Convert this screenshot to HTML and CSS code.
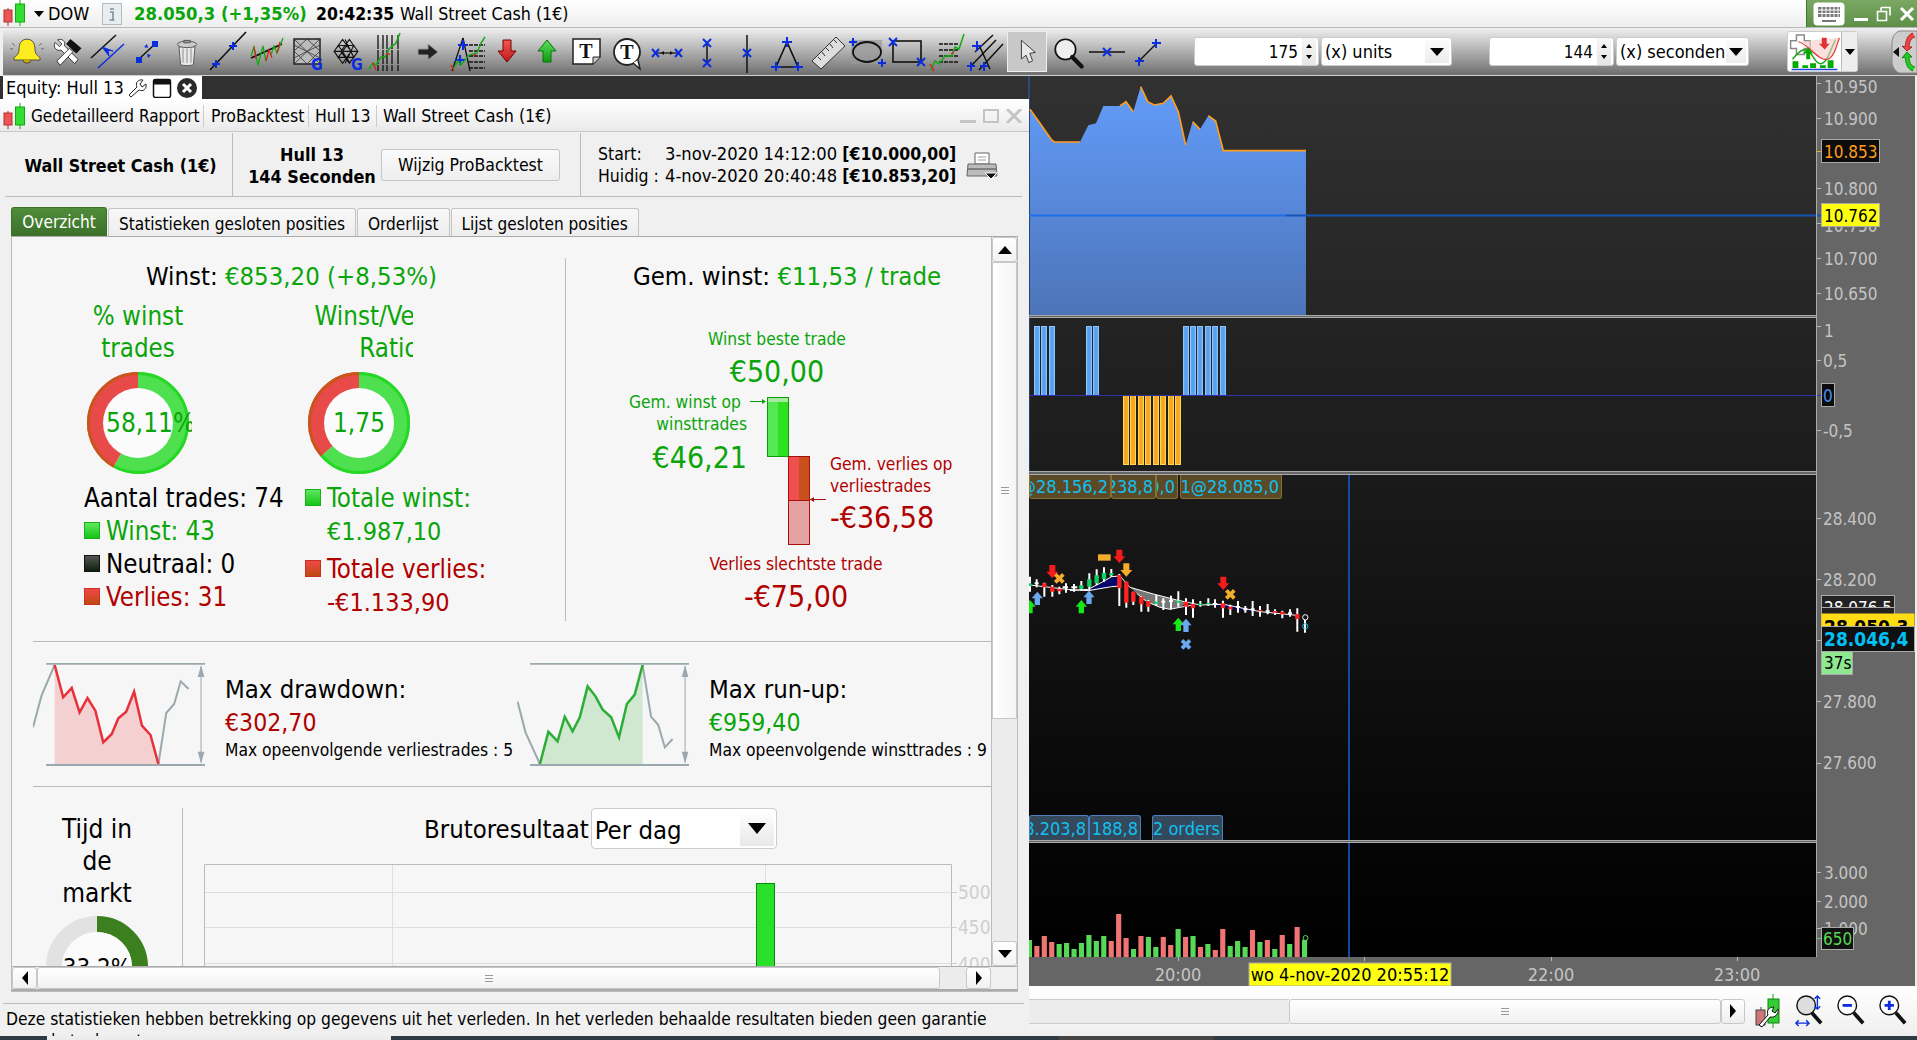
FILE: index.html
```html
<!DOCTYPE html>
<html lang="nl">
<head>
<meta charset="utf-8">
<title>Gedetailleerd Rapport</title>
<link rel="stylesheet" href="styles.css">
</head>
<body>
<svg class="defs" width="0" height="0">
  <defs>
    <linearGradient id="gArea" x1="0" y1="0" x2="0" y2="1"><stop offset="0" stop-color="#629cfa"/><stop offset="1" stop-color="#4d74b8"/></linearGradient>
    <linearGradient id="gRed" x1="0" y1="0" x2="0" y2="1"><stop offset="0" stop-color="#f05a50"/><stop offset="1" stop-color="#c01818"/></linearGradient>
    <linearGradient id="gGreen" x1="0" y1="0" x2="0" y2="1"><stop offset="0" stop-color="#5fe05f"/><stop offset="1" stop-color="#0f9a0f"/></linearGradient>
    <symbol id="candles" viewBox="0 0 25 27">
      <path d="M5 8v18" stroke="#a33" fill="none"/><rect x="1" y="10" width="8" height="12" fill="#e55" stroke="#a33"/>
      <path d="M17 0v26" stroke="#1a1" fill="none"/><rect x="12.500" y="4" width="9" height="18" fill="#3d3" stroke="#1a1"/>
    </symbol>
    <g id="up"><path d="M0-20L17 0H8V20H-8V0H-17z"/></g>
    <g id="down"><path d="M-9-20H9V0H18L0 20-18 0H-9z"/></g>
    <g id="cross"><path d="M-16-8L-8-16 0-8 8-16 16-8 8 0 16 8 8 16 0 8-8 16-16 8-8 0z"/></g>
  </defs>
</svg>
<div class="app">
  <header class="titlebar">
    <svg class="tb-candle"><use href="#candles"/></svg>
    <i class="tri-down tb-tri"></i>
    <span class="tb-dow">DOW</span>
    <svg class="tb-info" viewBox="0 0 20 24"><rect x=".5" y="1.500" width="19" height="21" fill="#e8eef0" stroke="#b4bcc0"/><path d="M8 7h4M8 10h3v8h1.500M7.500 18h5" fill="none" stroke="#7d9096" stroke-width="1.600"/></svg>
    <b class="tb-quote">28.050,3 (+1,35%)</b>
    <b class="tb-time">20:42:35</b>
    <span class="tb-name">Wall Street Cash (1€)</span>
    <div class="winctl">
      <svg class="wc-kbd" viewBox="0 0 32 24"><rect x=".5" y=".5" width="31" height="23" rx="4" fill="#fff"/><path d="M5 5h22v10H5z" fill="#777"/><path d="M5 8h22M5 11.500h22M9 5v10M13 5v10M17 5v10M21 5v10M25 5v10" stroke="#fff"/><rect x="9" y="18" width="14" height="2" fill="#777"/></svg>
      <svg class="wc-btn" viewBox="0 0 16 16"><rect x="1" y="12" width="14" height="3" fill="#fff"/></svg>
      <svg class="wc-btn" viewBox="0 0 16 16"><path d="M5 1.500h9v8M5 1.500v3M1.500 5.500h9v9h-9z" fill="none" stroke="#fff" stroke-width="1.600"/></svg>
      <svg class="wc-btn" viewBox="0 0 16 16"><path d="M2 2l12 12M14 2L2 14" stroke="#fff" stroke-width="3"/></svg>
    </div>
  </header>

  <nav class="toolbar">
    <svg class="ic" viewBox="0 0 40 44"><g transform="translate(0 2) scale(1 .8)"><path d="M20 9c-6 0-8 6-8 13 0 6-3 8-5 10v3h26v-3c-2-2-5-4-5-10 0-7-2-13-8-13z" fill="#ffec1e" stroke="#444"/><path d="M16 35a4 4 0 008 0" fill="#c9a800" stroke="#444"/><path d="M5 14l3 3M3 21h3M35 14l-3 3M37 21h-3" stroke="#666" fill="none"/></g></svg>
    <svg class="ic" viewBox="0 0 40 44"><g transform="translate(3 3) scale(.85)"><path d="M6 11l5 5 3-3-5-5c5-2 10 2 8 7l16 16-4 5-16-16c-5 2-10-3-7-9z" fill="#fff" stroke="#222"/><path d="M8 33l15-15 4 4-15 16z" fill="#fff" stroke="#222"/><path d="M24 7l13 11-6 6-12-11z" fill="#111"/></g></svg>
    <svg class="ic" viewBox="0 0 40 44"><path d="M4 28L29 5" stroke="#111" stroke-width="1.500"/><path d="M11 38L37 14" stroke="#0a2de0" stroke-width="1.500"/><path d="M15 17l7 9-1-6 5 1z" stroke="#0a2de0" fill="#0a2de0"/></svg>
    <svg class="ic" viewBox="0 0 40 44"><path d="M12 29L28 14" stroke="#111" stroke-width="1.500"/><path d="M9 27h6v6H9zM25 11h6v6h-6z" fill="#0a2de0"/><path d="M17 17l3-3 1 4zM24 25l-3 3-1-4z" fill="#0a2de0"/></svg>
    <svg class="ic" viewBox="0 0 40 44"><g transform="translate(4 4) scale(.8)"><path d="M10 16l2 22c2 2 14 2 16 0l2-22z" fill="#e8e8e8" stroke="#444"/><ellipse cx="20" cy="13" rx="12" ry="4" fill="#ccc" stroke="#444"/><path d="M16 8h8v3h-8z" fill="#999" stroke="#444"/><path d="M15 18v18M20 18v18M25 18v18" stroke="#777"/></g></svg>
    <svg class="ic" viewBox="0 0 40 44"><path d="M3 40L39 2" stroke="#111" stroke-width="1.600"/><path d="M9 30v8M5 34h8M26 12v8M22 16h8" stroke="#0a2de0" stroke-width="2"/></svg>
    <svg class="ic" viewBox="0 0 40 44"><path d="M4 28L35 14" stroke="#111" stroke-width="1.800"/><path d="M4 26l3-9 4 18 5-19 3 15M24 25l3-9 3 7 6-15" fill="none" stroke="#1a1" stroke-width="1.300"/><path d="M7 17l2 12M19 31l3-11 3 8M30 23l3-11" fill="none" stroke="#d22" stroke-width="1.300"/></svg>
    <svg class="ic" viewBox="0 0 40 44"><rect x="7" y="9" width="26" height="25" fill="#bbb" stroke="#222" stroke-width="1.500"/><path d="M7 9l26 25M33 9L7 34M20 9L7 21l13 13 13-13zM7 15l26 13M33 15L7 28" fill="none" stroke="#333" stroke-width=".8"/><text x="24" y="40" class="ic-g">G</text></svg>
    <svg class="ic" viewBox="0 0 40 44"><g transform="translate(2 1) scale(.85)"><path d="M6 24l10-14 10 14-10 14zM14 24L24 10l10 14-10 14zM6 24h28M10 17l20 0M10 31h20M11 17l14 21M21 17L11 31M29 17L19 38M19 10l10 21" fill="none" stroke="#111" stroke-width="1.300"/></g><text x="24" y="40" class="ic-g">G</text></svg>
    <svg class="ic" viewBox="0 0 40 44"><path d="M11 5v36M16 5v36M20 5v36M25 5v36M31 5v36" stroke="#111" stroke-width="1.300" stroke-dasharray="14 1"/><path d="M2 39l4-6 3 2 5-8 4 0 4-8 7-6 4-10" fill="none" stroke="#1a1" stroke-width="1.500"/><path d="M6 33l3 7M19 24h4" stroke="#d22" stroke-width="1.500"/></svg>
    <svg class="ic" viewBox="0 0 40 44"><path d="M11 19h10v-5l10 8-10 8v-5H11z" fill="#222" stroke="#999"/></svg>
    <svg class="ic" viewBox="0 0 40 44"><path d="M16 8L5 41" stroke="#111" stroke-width="1.300"/><path d="M16 8l7 33" stroke="#111" stroke-width="1.300"/><path d="M22 15h16M22 21h16M22 26h16M22 32h16M22 38h16" stroke="#111" stroke-width="1.400" stroke-dasharray="4 1"/><path d="M16 10v10M11 15h10M13 25v10M8 30h10" stroke="#0a2de0" stroke-width="2"/><path d="M6 39l5-8 3 4 8-10 8-2 4-10 4-6" fill="none" stroke="#1a1" stroke-width="1.400"/><path d="M4 35l3 6M26 26l3-2" stroke="#d22" stroke-width="1.400"/></svg>
    <svg class="ic" viewBox="0 0 40 44"><path d="M16 10h8v11h5L20 32 11 21h5z" fill="url(#gRed)" stroke="#700"/></svg>
    <svg class="ic" viewBox="0 0 40 44"><path d="M20 10l9 11h-5v11h-8V21h-5z" fill="url(#gGreen)" stroke="#070"/></svg>
    <svg class="ic" viewBox="0 0 40 44"><path d="M6 9h27v18l-7 7H6z" fill="#fff" stroke="#222" stroke-width="1.500"/><path d="M26 34v-7h7" fill="#ccc" stroke="#222"/><text x="19" y="28" class="ic-t">T</text></svg>
    <svg class="ic" viewBox="0 0 40 44"><circle cx="20" cy="22" r="13" fill="#fff" stroke="#222" stroke-width="1.800"/><path d="M26 33l7 6-2-9" fill="#fff" stroke="#222" stroke-width="1.500"/><text x="20" y="29" class="ic-t">T</text></svg>
    <svg class="ic" viewBox="0 0 40 44"><path d="M7 23h26" stroke="#111" stroke-width="1.200"/><path d="M5 19l7 8M12 19l-7 8M28 19l7 8M35 19l-7 8" stroke="#0a2de0" stroke-width="2"/><path d="M14 23l3-2v4zM26 23l-3-2v4z" fill="#111"/></svg>
    <svg class="ic" viewBox="0 0 40 44"><path d="M20 14v20" stroke="#111" stroke-width="1.500"/><path d="M16 9l8 8M24 9l-8 8M16 29l8 8M24 29l-8 8" stroke="#0a2de0" stroke-width="2"/></svg>
    <svg class="ic" viewBox="0 0 40 44"><path d="M20 5v38" stroke="#111" stroke-width="1.500"/><path d="M16 19l8 8M24 19l-8 8" stroke="#0a2de0" stroke-width="2"/></svg>
    <svg class="ic" viewBox="0 0 40 44"><path d="M20 12L9 37h22z" fill="none" stroke="#111" stroke-width="1.600"/><path d="M20 7v10M15 12h10M9 32v9M4 37h10M31 32v9M26 37h10" stroke="#0a2de0" stroke-width="2"/></svg>
    <svg class="ic" viewBox="0 0 40 44"><path d="M5 31L29 7l9 9-24 23z" fill="#ddd" stroke="#333"/><path d="M11 27l3 3M15 22l3 4M19 18l3 3M23 14l3 4M27 10l3 3" stroke="#333"/></svg>
    <svg class="ic" viewBox="0 0 40 44"><rect x="4" y="10" width="31" height="24" fill="#999" opacity=".7"/><ellipse cx="20" cy="22" rx="14" ry="10" fill="none" stroke="#111" stroke-width="1.800"/><path d="M2 12h8M6 8v8M31 33h8M35 29v8" stroke="#0a2de0" stroke-width="2"/></svg>
    <svg class="ic" viewBox="0 0 40 44"><rect x="6" y="11" width="28" height="21" fill="none" stroke="#111" stroke-width="1.600"/><path d="M2 8l8 8M10 8l-8 8M30 28l8 8M38 28l-8 8" stroke="#0a2de0" stroke-width="2"/></svg>
    <svg class="ic" viewBox="0 0 40 44"><path d="M12 14h20M12 20h20M12 26h20M12 32h20" stroke="#111" stroke-width="1.500" stroke-dasharray="4 1"/><path d="M4 40l4-9 4 3 6-8h7l3-9 4 2 5-15" fill="none" stroke="#1a1" stroke-width="1.500"/><path d="M3 34l4 7M24 24l3-2" stroke="#d22" stroke-width="1.500"/></svg>
    <svg class="ic" viewBox="0 0 40 44"><path d="M8 22L26 5M12 40L36 14M3 37L29 10M12 15l11 24" stroke="#111" stroke-width="1.500" fill="none"/><path d="M10 11v10M5 16h10M4 32v9M0 36h8M17 32v9M13 36h8" stroke="#0a2de0" stroke-width="2"/></svg>
    <svg class="ic ic-on" viewBox="0 0 40 44"><path d="M14 10v20l5-4 3 8 4-2-3-8 6-1z" fill="#e8e8e8" stroke="#333"/></svg>
    <svg class="ic" viewBox="0 0 40 44"><g transform="translate(4 5) scale(.85)"><circle cx="17" cy="17" r="12" fill="#eee" stroke="#111" stroke-width="2"/><path d="M25 26l11 11" stroke="#111" stroke-width="5" stroke-linecap="round"/></g></svg>
    <svg class="ic" viewBox="0 0 40 44"><path d="M2 22h36" stroke="#111" stroke-width="1.500"/><path d="M16 18l8 8M24 18l-8 8" stroke="#0a2de0" stroke-width="2"/></svg>
    <svg class="ic" viewBox="0 0 40 44"><path d="M12 31L30 13" stroke="#111" stroke-width="1.500"/><path d="M12 27v9M8 31h9M29 9v9M25 13h9" stroke="#0a2de0" stroke-width="2"/></svg>

    <div class="spin spin-a"><span>175</span><div class="spin-btns"><i class="tri-up-s"></i><i class="tri-down-s"></i></div></div>
    <div class="dd-box dd-a"><span>(x) units</span><em class="dd-arrow"><i class="tri-down"></i></em></div>
    <div class="spin spin-b"><span>144</span><div class="spin-btns"><i class="tri-up-s"></i><i class="tri-down-s"></i></div></div>
    <div class="dd-box dd-b"><span>(x) seconden</span><em class="dd-arrow"><i class="tri-down"></i></em></div>
    <div class="widget">
      <svg class="widget-ic" viewBox="0 0 53 40"><path d="M8 3h8v6h6v8h-6v6H8v-6H2V9h6z" fill="#fff" stroke="#888" stroke-width="1.500"/><path d="M4 28C12 18 18 14 24 24s10 12 16 2l8-18" fill="none" stroke="#1a1" stroke-width="1.500"/><path d="M10 10c10 2 20 20 30 18 6-2 8-10 12-22" fill="#f8c8c8" fill-opacity=".6" stroke="#d33" stroke-width="1.200"/><path d="M34 6h5v6h3l-5 6-6-6h3z" fill="#d33"/><path d="M20 16l5 6h-3v6h-4v-6h-3z" fill="#0a0"/><path d="M4 30h6v7H4zM14 34h6v3h-6zM22 32h6v5h-6zM32 34h6v3h-6zM40 29h6v8h-6z" fill="#0a0"/><path d="M3 38.500h47" stroke="#2244dd" stroke-width="1.500"/></svg>
      <em class="widget-arrow"><i class="tri-down"></i></em>
    </div>
    <svg class="handle" viewBox="0 0 26 44"><path d="M26 1H8C3 3 1 8 1 14v18c0 4 3 9 7 11h18z" fill="#ccc" stroke="#888"/><path d="M2 22l6-5v10z" fill="#111"/><path d="M22 3c-6 2-7 8-8 14l-3-1 5 5 5-4-3 0c0-5 2-9 6-10" fill="#e44" stroke="#a22"/><path d="M22 41c-6-2-7-8-8-14l-3 1 5-6 5 5-3 0c0 5 2 9 6 10" fill="#2c2" stroke="#181"/></svg>
  </nav>

  <main class="workspace">
    <div class="charts">
      <div class="plots">
        <section class="pane pane-eq">
          <svg class="pane-svg" width="1817" height="239" viewBox="0 76 1817 239">
            <path d="M1029 76v239" stroke="#2a62c0"/>
            <g transform="translate(1020 60) scale(.3333)">
              <path d="M30 148L60 190 95 240 103 246H180L205 196 228 190 250 138H300L318 125 340 155 362 80 383 125 403 135 430 130 453 108 475 155 497 255 518 185 540 208 565 167 587 183 610 272H858V765H30z" fill="url(#gArea)"/>
              <path d="M30 148L60 190 95 240 103 246H180M300 138L318 125 340 155M362 80L383 125 403 135 430 130 453 108 475 155 497 255M518 185L540 208M565 167L587 183 610 272H858" fill="none" stroke="#ff9d1c" stroke-width="5"/>
            </g>
            <path d="M1029 215.500h257" stroke="#1f6fe8" stroke-width="2"/>
            <path d="M1286 215.500h531" stroke="#1555b8" stroke-width="2"/>
          </svg>
          <div class="equity-bar">
            <span>Equity: Hull 13</span>
            <svg class="eq-ic" viewBox="0 0 20 20"><path d="M2 17l8-8c-2-4 1-8 6-7l-3 4 2 3 4-3c1 5-3 8-7 6l-8 7z" fill="#fff" stroke="#222"/></svg>
            <svg class="eq-ic" viewBox="0 0 20 20"><rect x="1.500" y="1.500" width="17" height="18" rx="2" fill="#fff" stroke="#111" stroke-width="1.500"/><rect x="1.500" y="1.500" width="17" height="5" fill="#111"/></svg>
            <svg class="eq-ic" viewBox="0 0 20 20"><circle cx="10" cy="10" r="10" fill="#2a2a2a"/><path d="M6 6l8 8M14 6l-8 8" stroke="#fff" stroke-width="3"/></svg>
          </div>
        </section>
        <div class="sep"></div>
        <section class="pane pane-pos">
          <svg class="pane-svg" width="1817" height="153" viewBox="0 318 1817 153">
            <path d="M1029 318v153" stroke="#2a62c0"/>
            <g transform="translate(1020 60) scale(.3333)">
              <path d="M51 798V1005M72 798V1005M96 798V1005M207 798V1005M228 798V1005M498 798V1005M519 798V1005M540 798V1005M564 798V1005M585 798V1005M609 798V1005" stroke="#8cc6ff" stroke-width="18"/>
              <path d="M51 801V1005M72 801V1005M96 801V1005M207 801V1005M228 801V1005M498 801V1005M519 801V1005M540 801V1005M564 801V1005M585 801V1005M609 801V1005" stroke="#5a9ff0" stroke-width="11"/>
              <path d="M318 1008V1215M339 1008V1215M363 1008V1215M384 1008V1215M408 1008V1215M429 1008V1215M453 1008V1215M474 1008V1215" stroke="#ffd850" stroke-width="18"/>
              <path d="M318 1008V1212M339 1008V1212M363 1008V1212M384 1008V1212M408 1008V1212M429 1008V1212M453 1008V1212M474 1008V1212" stroke="#f5a51e" stroke-width="11"/>
            </g>
            <path d="M1029 395.500h788" stroke="#3030a8"/>
          </svg>
        </section>
        <div class="sep sep-wide"></div>
        <section class="pane pane-price">
          <svg class="pane-svg" width="1817" height="365" viewBox="0 475 1817 365">
            <path d="M1349 475v365" stroke="#1448a8" stroke-width="2"/>
            <g transform="translate(1020 470) scale(.3333)">
              <path d="M150 362L205 360 240 343 275 323 300 320V350L275 350 235 358 205 362zM575 405L610 403 720 425 660 420z" fill="#050570"/>
              <path d="M330 352L400 372 470 390 500 400 480 412 450 418 420 412 380 395 350 370z" fill="#777"/>
              <path d="M30 345L140 358 205 362 275 350 300 348M150 362L205 358 240 340 275 320 300 318 330 352 400 372 470 390 540 405 610 403 720 425 830 436M350 370L380 395 420 412 450 418 480 412 520 405" fill="none" stroke="#fff" stroke-width="3"/>
              <path d="M30 320V365M50 328V352M73 338V380M97 345V380M118 350V373M138 340V368M162 342V365M184 333V362M208 310V362M230 298V345M252 292V335M274 297V320M298 312V408M319 335V413M340 365V405M364 378V425M385 390V425M409 375V408M430 385V420M453 377V418M475 364V410M498 385V435M519 388V443M541 393V410M565 385V408M585 388V413M609 392V443M631 404V435M654 393V428M676 408V428M698 393V438M720 408V440M743 402V433M765 418V435M787 422V445M810 418V440M832 415V485M855 450V488" stroke="#fff" stroke-width="6"/>
              <path d="M44 340h12M128 352h16M154 352h18M424 395h12M447 393h12M578 402h14M648 411h12M670 418h12M692 418h12M737 424h12M804 430h12M27 340h6" stroke="#fff" stroke-width="6"/>
              <path d="M28 340V348M184 346V356M208 328V350M230 316V340M252 308V328M274 310V316M409 395V401M475 392V398M541 401V406M565 399V403" stroke="#0ed060" stroke-width="13"/>
              <path d="M73 340V352M97 350V365M118 356V364M298 315V355M319 335V398M340 365V395M364 380V403M385 393V410M498 395V410M519 402V415M609 400V415M631 410V418M720 420V424M765 423V428M787 425V433M832 432V447" stroke="#f22" stroke-width="13"/>
              <use href="#up" x="30" y="410" fill="#18e818"/><use href="#up" x="184" y="410" fill="#18e818"/><use href="#up" x="475" y="463" fill="#18e818"/>
              <use href="#up" x="52" y="385" fill="#6aa8f0"/><use href="#up" x="207" y="382" fill="#6aa8f0"/><use href="#up" x="498" y="466" fill="#6aa8f0"/>
              <use href="#down" x="97" y="305" fill="#f21c1c"/><use href="#down" x="298" y="259" fill="#f21c1c"/><use href="#down" x="610" y="340" fill="#f21c1c"/><use href="#down" x="319" y="300" fill="#f5ac2c"/>
              <use href="#cross" x="118" y="325" fill="#f5ac2c"/><use href="#cross" x="631" y="373" fill="#f5ac2c"/><use href="#cross" x="498" y="523" fill="#6aa8f0"/>
              <rect x="234" y="253" width="38" height="19" fill="#f5ac2c"/>
              <circle cx="856" cy="442" r="8" fill="none" stroke="#fff" stroke-width="3"/><circle cx="856" cy="469" r="8" fill="none" stroke="#20c0f0" stroke-width="3"/>
            </g>
          </svg>
          <div class="ordertabs ordertabs-top">
            <div class="otab otab-a"><span>1@28.156,2</span></div>
            <div class="otab otab-b"><span>1@28.238,8</span></div>
            <div class="otab otab-c"><span>1@28.110,0</span></div>
            <div class="otab otab-d"><span>1@28.085,0</span></div>
          </div>
          <div class="ordertabs ordertabs-bot">
            <div class="otab otab-e"><span>1@28.203,8</span></div>
            <div class="otab otab-f"><span>1@28.188,8</span></div>
            <div class="otab otab-g"><span>2 orders</span></div>
          </div>
        </section>
        <div class="sep"></div>
        <section class="pane pane-vol">
          <svg class="pane-svg" width="1817" height="114" viewBox="0 843 1817 114">
            <path d="M1349 843v114" stroke="#1448a8" stroke-width="2"/>
            <g transform="translate(1017.700 800) scale(.572 .3333)">
              <path fill="#58d858" d="M16 420h9V471h-9zM68 432h9V471h-9zM81 429h9V471h-9zM94 447h9V471h-9zM107 429h9V471h-9zM120 405h9V471h-9zM133 423h9V471h-9zM146 408h9V471h-9zM198 447h9V471h-9zM224 411h9V471h-9zM237 441h9V471h-9zM276 387h9V471h-9zM302 408h9V471h-9zM328 432h9V471h-9zM367 438h9V471h-9zM380 423h9V471h-9zM393 441h9V471h-9zM419 426h9V471h-9zM445 447h9V471h-9zM471 432h9V471h-9zM497 420h9V471h-9z"/>
              <path fill="#f07474" d="M29 438h9V471h-9zM42 408h9V471h-9zM55 426h9V471h-9zM159 423h9V471h-9zM172 342h9V471h-9zM185 414h9V471h-9zM211 408h9V471h-9zM250 411h9V471h-9zM263 435h9V471h-9zM289 411h9V471h-9zM315 441h9V471h-9zM341 450h9V471h-9zM354 387h9V471h-9zM406 390h9V471h-9zM432 420h9V471h-9zM458 405h9V471h-9zM484 381h9V471h-9z"/>
            </g>
            <circle cx="1305.500" cy="938" r="2.500" fill="none" stroke="#58d858"/>
          </svg>
        </section>
      </div>
      <svg class="axis" width="100" height="881" viewBox="1817 76 100 881">
        <g class="tick" stroke="#b8b8b8"><path d="M1817 83.500h4M1817 118.500h4M1817 188.500h4M1817 223.500h4M1817 258.500h4M1817 293.500h4M1817 326.500h4M1817 360.500h4M1817 430.500h4M1817 518.500h4M1817 579.500h4M1817 640.500h4M1817 701.500h4M1817 763.500h4M1817 872.500h4M1817 901.500h4M1817 928.500h4"/></g>
        <path d="M1817 151.500h4" stroke="#ff9d1c"/><path d="M1817 215.500h4" stroke="#1555b8" stroke-width="2"/><path d="M1817 395.500h4" stroke="#3030a8"/><path d="M1817 938.500h4" stroke="#58d858"/>
        <path d="M1915 76h2v881h-2z" fill="#ececec"/>
        <g class="axis-text">
          <text x="1824" y="93">10.950</text><text x="1824" y="125">10.900</text><text x="1824" y="195">10.800</text><text x="1824" y="265">10.700</text><text x="1824" y="300">10.650</text><text x="1824" y="232">10.750</text>
          <text x="1824" y="337">1</text><text x="1823" y="367">0,5</text><text x="1823" y="437">-0,5</text>
          <text x="1823" y="525">28.400</text><text x="1823" y="586">28.200</text><text x="1823" y="708">27.800</text><text x="1823" y="769">27.600</text>
          <text x="1824" y="879">3.000</text><text x="1824" y="908">2.000</text><text x="1824" y="935">1.000</text>
        </g>
        <rect x="1821.500" y="139.500" width="58" height="23" fill="#0c0c0c" stroke="#aaa"/><text x="1824" y="158" class="axis-val" fill="#ff9d1c">10.853</text>
        <rect x="1821.500" y="203.500" width="58" height="23" fill="#ffff10" stroke="#aaa"/><text x="1824" y="222" class="axis-val" fill="#000">10.762</text>
        <rect x="1821.500" y="383.500" width="13" height="23" fill="#0c0c0c" stroke="#aaa"/><text x="1823" y="402" class="axis-val" fill="#4a90f0">0</text>
        <rect x="1821.500" y="595.500" width="73" height="23" fill="#222" stroke="#aaa"/><text x="1824" y="614" class="axis-val" fill="#fff">28.076,5</text>
        <rect x="1821.500" y="607.500" width="73" height="18" fill="#222" stroke="#aaa"/>
        <rect x="1821.500" y="613.500" width="93" height="24" fill="#ffdc14"/><text x="1824" y="634" class="axis-bold" fill="#000">28.050,3</text>
        <rect x="1821.500" y="626.500" width="93" height="25" fill="#101010" stroke="#aaa"/><text x="1824" y="646" class="axis-bold" fill="#00c0f5">28.046,4</text>
        <rect x="1821.500" y="651.500" width="31" height="23" fill="#8fe88f" stroke="#aaa"/><text x="1824" y="669" class="axis-val" fill="#000">37s</text>
        <rect x="1821.500" y="927.500" width="32" height="22" fill="#111" stroke="#aaa"/><text x="1823" y="945" class="axis-val" fill="#58d858">650</text>
      </svg>
    </div>
    <div class="timeaxis">
      <svg class="time-svg" width="1917" height="29" viewBox="0 0 1917 29">
        <path d="M1178.500 0v4M1364.500 0v4M1551.500 0v4M1737.500 0v4" stroke="#b8b8b8"/>
        <g class="time-text"><text x="1178" y="24">20:00</text><text x="1551" y="24">22:00</text><text x="1737" y="24">23:00</text></g>
        <rect x="1249" y="6" width="202" height="23" fill="#ffff10" stroke="#aaa"/><text x="1350" y="24" class="time-cur">wo 4-nov-2020 20:55:12</text>
        <path d="M1915 0h2v29h-2z" fill="#ececec"/>
      </svg>
    </div>
    <div class="bottombar">
      <div class="hscroll-main">
        <div class="hs-track"></div>
        <div class="hs-thumb"><i class="grip"></i></div>
        <div class="hs-btn"><i class="tri-right"></i></div>
      </div>
      <svg class="bb-ic bb-first" viewBox="0 0 26 36"><path d="M6 14v20" stroke="#444"/><rect x="1" y="17" width="9" height="15" fill="#c77" stroke="#444"/><path d="M18 1v34" stroke="#1a1"/><rect x="13" y="6" width="11" height="24" fill="#3c3" stroke="#181"/><path d="M4 32l9-10c-2-4 1-8 6-8l-2 4 3 2 3-4c1 5-3 9-8 8l-8 10z" fill="#fff" stroke="#111"/></svg>
      <svg class="bb-ic" viewBox="0 0 30 36"><circle cx="12" cy="12" r="10" fill="#ddd" stroke="#111" stroke-width="1.500"/><path d="M18 20l10 11" stroke="#111" stroke-width="4"/><path d="M24 2v14M21 5l3-3 3 3M21 13l3 3 3-3M1 31h14M4 28l-3 3 3 3M12 28l3 3-3 3" fill="none" stroke="#0a2de0" stroke-width="1.500"/></svg>
      <svg class="bb-ic" viewBox="0 0 30 36"><circle cx="11" cy="12" r="10" fill="#fff" stroke="#111" stroke-width="1.500"/><path d="M18 20l10 11" stroke="#111" stroke-width="4"/><path d="M6 12h10" stroke="#0a2de0" stroke-width="3"/></svg>
      <svg class="bb-ic" viewBox="0 0 30 36"><circle cx="11" cy="12" r="10" fill="#fff" stroke="#111" stroke-width="1.500"/><path d="M18 20l10 11" stroke="#111" stroke-width="4"/><path d="M6 12h10M11 7v10" stroke="#0a2de0" stroke-width="3"/></svg>
    </div>

    <article class="report">
      <div class="rp-title">
        <svg class="rp-candle"><use href="#candles"/></svg>
        <span class="rt rt-1">Gedetailleerd Rapport</span>
        <span class="rt rt-2">ProBacktest</span>
        <span class="rt rt-3">Hull 13</span>
        <span class="rt rt-4">Wall Street Cash (1€)</span>
        <div class="rp-ctl">
          <svg class="rc" viewBox="0 0 16 14"><rect y="11" width="16" height="3" fill="#c4c4c4"/></svg>
          <svg class="rc" viewBox="0 0 16 14"><rect x="1" y="1" width="14" height="12" fill="none" stroke="#c4c4c4" stroke-width="2"/></svg>
          <svg class="rc" viewBox="0 0 16 14"><path d="M1 0l14 14M15 0L1 14" stroke="#c4c4c4" stroke-width="3"/></svg>
        </div>
      </div>
      <div class="rp-head">
        <div class="hd-inst">Wall Street Cash (1€)</div>
        <div class="hd-sys">
          <div class="hd-sysname">Hull 13<br>144 Seconden</div>
          <button class="hd-btn" type="button">Wijzig ProBacktest</button>
        </div>
        <div class="hd-dates">
          <div class="hd-row"><span class="hd-k">Start:</span><span class="hd-d">3-nov-2020 14:12:00 <b>[€10.000,00]</b></span></div>
          <div class="hd-row"><span class="hd-k">Huidig :</span><span class="hd-d">4-nov-2020 20:40:48 <b>[€10.853,20]</b></span></div>
        </div>
        <svg class="hd-print" viewBox="0 0 32 28"><path d="M9 1h14v11H9z" fill="#fff" stroke="#666"/><path d="M12 5h8M12 8h8" stroke="#999"/><path d="M2 12h28l1 12H1z" fill="#bbb" stroke="#666"/><path d="M2 17h28" stroke="#444"/><path d="M19 21h12l-6 6z" fill="#111" stroke="#fff"/></svg>
      </div>
      <div class="tabs">
        <div class="tab tab-on">Overzicht</div>
        <div class="tab">Statistieken gesloten posities</div>
        <div class="tab">Orderlijst</div>
        <div class="tab">Lijst gesloten posities</div>
      </div>
      <div class="panel">
        <div class="panel-main">
          <div class="viewport">
            <div class="ov-top">
              <div class="ov-left">
                <div class="bigline ov-lhead">Winst: <span class="gr">€853,20 (+8,53%)</span></div>
                <div class="ov-cols">
                  <div class="ov-col ov-col1">
                    <div class="g-title gr">% winst<br>trades</div>
                    <div class="donut">
                      <svg class="donut-svg" viewBox="0 0 102 102">
                        <g transform="rotate(-90 51 51)" fill="none">
                          <circle cx="51" cy="51" r="42.500" stroke="#4fe04f" stroke-width="17" pathLength="100" stroke-dasharray="58.11 100"/>
                          <circle cx="51" cy="51" r="49.500" stroke="#25d825" stroke-width="3" pathLength="100" stroke-dasharray="58.11 100"/>
                          <circle cx="51" cy="51" r="42.500" stroke="#e84a4a" stroke-width="17" pathLength="100" stroke-dasharray="41.89 100" stroke-dashoffset="-58.11"/>
                          <circle cx="51" cy="51" r="49.500" stroke="#c8551a" stroke-width="3" pathLength="100" stroke-dasharray="41.89 100" stroke-dashoffset="-58.11"/>
                        </g>
                        <circle cx="51" cy="51" r="35" fill="#fbfbfb"/>
                      </svg>
                      <div class="donut-val donut-val-clip gr">58,11%</div>
                    </div>
                    <div class="stat">Aantal trades: 74</div>
                    <div class="stat gr"><i class="sw sw-g"></i>Winst: 43</div>
                    <div class="stat"><i class="sw sw-k"></i>Neutraal: 0</div>
                    <div class="stat rd"><i class="sw sw-r"></i>Verlies: 31</div>
                  </div>
                  <div class="ov-col">
                    <div class="g-title g-title-clip gr"><div class="g-title-in">Winst/Verlies<br>Ratio</div></div>
                    <div class="donut donut-2">
                      <svg class="donut-svg" viewBox="0 0 102 102">
                        <g transform="rotate(-90 51 51)" fill="none">
                          <circle cx="51" cy="51" r="42.500" stroke="#4fe04f" stroke-width="17" pathLength="100" stroke-dasharray="63.6 100"/>
                          <circle cx="51" cy="51" r="49.500" stroke="#25d825" stroke-width="3" pathLength="100" stroke-dasharray="63.6 100"/>
                          <circle cx="51" cy="51" r="42.500" stroke="#e84a4a" stroke-width="17" pathLength="100" stroke-dasharray="36.4 100" stroke-dashoffset="-63.6"/>
                          <circle cx="51" cy="51" r="49.500" stroke="#c8551a" stroke-width="3" pathLength="100" stroke-dasharray="36.4 100" stroke-dashoffset="-63.6"/>
                        </g>
                        <circle cx="51" cy="51" r="35" fill="#fbfbfb"/>
                      </svg>
                      <div class="donut-val gr">1,75</div>
                    </div>
                    <div class="stat gr"><i class="sw sw-g"></i>Totale winst:</div>
                    <div class="stat stat-ind stat-num gr">€1.987,10</div>
                    <div class="stat rd stat-gap"><i class="sw sw-r"></i>Totale verlies:</div>
                    <div class="stat stat-ind stat-num rd">-€1.133,90</div>
                  </div>
                </div>
              </div>
              <div class="ov-vline"></div>
              <div class="ov-right">
                <div class="bigline">Gem. winst: <span class="gr">€11,53 / trade</span></div>
                <div class="wf">
                  <div class="wf-best gr"><div class="wf-lab">Winst beste trade</div><div class="wf-val">€50,00</div></div>
                  <div class="wf-mid">
                    <div class="wf-l gr"><div class="wf-lab wf-lab-in">Gem. winst op</div><div class="wf-lab">winsttrades</div><div class="wf-val wf-val-l">€46,21</div></div>
                    <svg class="wf-bars" viewBox="0 0 76 148">
                      <path d="M0 4.500h14" stroke="#0a9a0a"/><path d="M12 2l4 2.500-4 2.500z" fill="#0a9a0a"/>
                      <rect x="17.500" y=".5" width="21" height="59" fill="#2fe01f" stroke="#0a9a0a"/><rect x="18" y="5" width="10" height="54" fill="#55e855"/><rect x="18" y="1" width="20" height="4" fill="#a8e8a0"/>
                      <rect x="38.500" y="59.500" width="21" height="44" fill="#c9501c" stroke="#a80f0f"/><rect x="39" y="60" width="10" height="43" fill="#ef4f4f"/>
                      <rect x="38.500" y="103.500" width="21" height="44" fill="#e4a2a2" stroke="#a80f0f"/>
                      <path d="M60 102.500h16" stroke="#a80f0f"/><path d="M64 100l-4 2.500 4 2.500z" fill="#a80f0f"/>
                    </svg>
                    <div class="wf-r rd"><div class="wf-lab">Gem. verlies op</div><div class="wf-lab">verliestrades</div><div class="wf-val wf-val-r">-€36,58</div></div>
                  </div>
                  <div class="wf-worst rd"><div class="wf-lab">Verlies slechtste trade</div><div class="wf-val">-€75,00</div></div>
                </div>
              </div>
            </div>
            <div class="ov-dd">
              <div class="dd dd-1">
                <svg class="dd-svg" viewBox="50 72 262 309" preserveAspectRatio="none">
                  <path d="M83 78L96 175 109 147 121 220 133 177 145 215 157 310 170 285 180 238 192 218 204 158 216 260 229 288 241 375H83z" fill="#f4d0d0"/>
                  <path class="dd-s" d="M50 265L63 170 83 78M241 375L253 222 265 195 275 127 287 150" stroke="#9ba8ae" stroke-width="2"/>
                  <path class="dd-s" d="M83 78L96 175 109 147 121 220 133 177 145 215 157 310 170 285 180 238 192 218 204 158 216 260 229 288 241 375" stroke="#e8303a" stroke-width="2.500"/>
                  <path class="dd-s" d="M70 74H312M70 378H312" stroke="#9ba8ae" stroke-width="2"/>
                  <path class="dd-s" d="M306 82V370" stroke="#9ba8ae"/>
                  <path d="M306 78l5 36h-10zM306 374l5-36h-10z" fill="#9ba8ae"/>
                </svg>
                <div class="dd-text">
                  <div class="dd-h">Max drawdown:</div>
                  <div class="dd-v rd">€302,70</div>
                  <div class="dd-n">Max opeenvolgende verliestrades : 5</div>
                </div>
              </div>
              <div class="dd dd-2">
                <svg class="dd-svg" viewBox="787 72 263 309" preserveAspectRatio="none">
                  <path d="M822 375L835 278 849 307 860 233 872 277 883 235 895 142 907 172 918 212 931 235 943 295 955 195 967 167 979 78V375z" fill="#d0e8d0"/>
                  <path class="dd-s" d="M788 188L800 280 822 375M979 78L992 233 1003 258 1013 325 1025 300" stroke="#9ba8ae" stroke-width="2"/>
                  <path class="dd-s" d="M822 375L835 278 849 307 860 233 872 277 883 235 895 142 907 172 918 212 931 235 943 295 955 195 967 167 979 78" stroke="#2cae36" stroke-width="2.500"/>
                  <path class="dd-s" d="M807 74H1050M807 378H1050" stroke="#9ba8ae" stroke-width="2"/>
                  <path class="dd-s" d="M1044 82V370" stroke="#9ba8ae"/>
                  <path d="M1044 78l5 36h-10zM1044 374l5-36h-10z" fill="#9ba8ae"/>
                </svg>
                <div class="dd-text">
                  <div class="dd-h">Max run-up:</div>
                  <div class="dd-v gr">€959,40</div>
                  <div class="dd-n">Max opeenvolgende winsttrades : 9</div>
                </div>
              </div>
            </div>
            <div class="ov-bot">
              <div class="ov-time">
                <div class="bigline ot-title">Tijd in<br>de<br>markt</div>
                <svg class="ot-gauge" viewBox="0 0 102 102">
                  <circle cx="51" cy="51" r="43" fill="none" stroke="#e2e2e2" stroke-width="16"/>
                  <circle cx="51" cy="51" r="43" fill="none" stroke="#3c7f1e" stroke-width="16" pathLength="100" stroke-dasharray="33.2 100" transform="rotate(-90 51 51)"/>
                  <circle cx="51" cy="51" r="35" fill="#fbfbfb"/>
                  <text x="51" y="60" class="ot-val">33,2%</text>
                </svg>
              </div>
              <div class="ov-brut">
                <div class="br-head">
                  <span>Brutoresultaat</span>
                  <div class="dd-box br-sel"><span>Per dag</span><em class="dd-arrow"><i class="tri-down"></i></em></div>
                </div>
                <svg class="br-chart" width="786" height="102" viewBox="204 865 786 102">
                  <path d="M204.500 967V865.500H951.500V967" fill="none" stroke="#bbb"/>
                  <path d="M205 893.500h746M205 928.500h746M205 964.500h746M392.500 866v101M765.500 866v101" stroke="#dedede"/>
                  <path d="M951 893.500h6M951 928.500h6M951 964.500h6" stroke="#ccc"/>
                  <rect x="756.500" y="884.500" width="18" height="90" fill="#2be02b" stroke="#0a8a0a"/>
                  <g class="br-axis"><text x="958" y="900">500</text><text x="958" y="935">450</text><text x="958" y="972">400</text></g>
                </svg>
              </div>
            </div>
          </div>
          <div class="vscroll">
            <div class="vs-btn"><i class="tri-up"></i></div>
            <div class="vs-thumb"><i class="grip"></i></div>
            <div class="vs-track"></div>
            <div class="vs-btn"><i class="tri-down"></i></div>
          </div>
        </div>
        <div class="hscroll">
          <div class="h-btn"><i class="tri-left"></i></div>
          <div class="h-thumb"><i class="grip"></i></div>
          <div class="h-track"></div>
          <div class="h-btn"><i class="tri-right"></i></div>
          <div class="h-corner"></div>
        </div>
      </div>
      <div class="rp-status">Deze statistieken hebben betrekking op gegevens uit het verleden. In het verleden behaalde resultaten bieden geen garantie<br>voor de toekomst.</div>
    </article>
  </main>
  <footer class="strip"><i class="st-a"></i><i class="st-b"></i><i class="st-c"></i><i class="st-d"></i></footer>
</div>
</body>
</html>
```
FILE: styles.css
```css
* { box-sizing: border-box; }
html, body { margin: 0; padding: 0; background: #f0f0f0; }
body { font-family: "DejaVu Sans Condensed", "DejaVu Sans", sans-serif; font-stretch: condensed; font-size: 17px; color: #000; overflow: hidden; }
.defs { position: absolute; }
i, em { font-style: normal; display: block; }
svg { display: block; flex: none; }
.app { width: 1917px; height: 1040px; display: flex; flex-direction: column; overflow: hidden; }
.gr { color: #0aa50a; }
.rd { color: #b00000; }

/* triangles */
.tri-down { width: 0; height: 0; border-left: 7px solid transparent; border-right: 7px solid transparent; border-top: 8px solid #000; }
.tri-up { width: 0; height: 0; border-left: 7px solid transparent; border-right: 7px solid transparent; border-bottom: 8px solid #000; }
.tri-left { width: 0; height: 0; border-top: 7px solid transparent; border-bottom: 7px solid transparent; border-right: 6px solid #000; }
.tri-right { width: 0; height: 0; border-top: 7px solid transparent; border-bottom: 7px solid transparent; border-left: 6px solid #000; }
.tri-up-s { width: 0; height: 0; border-left: 3px solid transparent; border-right: 3px solid transparent; border-bottom: 4px solid #000; }
.tri-down-s { width: 0; height: 0; border-left: 3px solid transparent; border-right: 3px solid transparent; border-top: 4px solid #000; }
.grip { width: 8px; height: 7px; background: repeating-linear-gradient(#999 0 1px, transparent 1px 3px); }

/* title bar */
.titlebar { height: 28px; flex: none; display: flex; align-items: center; background: linear-gradient(#ffffff, #eeeeee); border-bottom: 1px solid #b8b8b8; font-size: 17.500px; white-space: nowrap; }
.tb-candle { width: 25px; height: 27px; margin-left: 3px; }
.tb-tri { margin-left: 6px; border-left-width: 5px; border-right-width: 5px; border-top-width: 6px; }
.tb-dow { margin-left: 4px; width: 54px; font-size: 18px; }
.tb-info { width: 20px; height: 24px; }
.tb-quote { margin-left: 12px; width: 182px; color: #0aa50a; font-size: 18.300px; }
.tb-time { width: 84px; font-size: 17.500px; }
.tb-name { width: 170px; font-size: 17.700px; }
.winctl { margin-left: auto; width: 111px; height: 27px; background: linear-gradient(#7aa864, #5f8f47); border-left: 1px solid #3c7a28; display: flex; align-items: center; padding-left: 6px; gap: 7px; }
.wc-kbd { width: 32px; height: 24px; margin-right: 1px; }
.wc-btn { width: 16px; height: 16px; }

/* toolbar */
.toolbar { height: 48px; flex: none; margin-left: 3px; padding-left: 4px; display: flex; align-items: center; background: linear-gradient(#f0f0f0, #6e6e6e); border-bottom: 1px solid #d0d0d0; }
.ic { width: 40px; height: 44px; }
.ic-on { height: 41px; background: #c8c8c8; outline: 1px solid #eee; outline-offset: -1px; }
.ic-g { font: bold 16px "DejaVu Sans Condensed", sans-serif; fill: #0a2de0; }
.ic-t { font: bold 20px "Liberation Serif", serif; fill: #111; text-anchor: middle; }
.spin, .dd-box { height: 29px; background: #fff; border: 1px solid #ccc; border-radius: 3px; display: flex; align-items: center; font-size: 18px; white-space: nowrap; }
.spin { justify-content: flex-end; font-size: 17px; }
.spin-a { width: 125px; margin-left: 27px; }
.spin-b { width: 125px; margin-left: 37px; }
.spin-btns { width: 14px; height: 100%; display: flex; flex-direction: column; align-items: center; justify-content: space-evenly; background: linear-gradient(#f6f6f6, #e6e6e6); margin-left: 4px; margin-right: 2px; }
.dd-box { padding-left: 3px; position: relative; }
.dd-a { width: 131px; margin-left: 2px; }
.dd-b { width: 133px; margin-left: 2px; font-size: 18px; }
.dd-arrow { position: absolute; right: 2px; top: 2px; bottom: 2px; width: 24px; display: flex; align-items: center; justify-content: center; background: linear-gradient(#fbfbfb, #ececec); }
.dd-b .dd-arrow { width: 20px; }
.widget { width: 71px; height: 41px; margin-left: 38px; display: flex; background: #fff; border: 1px solid #ccc; border-radius: 3px; }
.widget-ic { width: 53px; height: 39px; }
.widget-arrow { flex: 1; display: flex; align-items: center; justify-content: center; background: #eee; border-left: 1px solid #bbb; }
.widget-arrow .tri-down { border-left-width: 5px; border-right-width: 5px; border-top-width: 6px; }
.handle { width: 26px; height: 44px; margin-left: 33px; }

/* workspace and charts */
.workspace { flex: 1; position: relative; display: flex; flex-direction: column; min-height: 0; }
.charts { display: flex; height: 881px; flex: none; background: #666; }
.plots { width: 1817px; display: flex; flex-direction: column; flex: none; border-right: 1px solid #aaa; }
.pane { position: relative; overflow: hidden; flex: none; width: 1816px; }
.pane-eq { height: 239px; background: linear-gradient(#313131, #252525); }
.pane-pos { height: 153px; background: linear-gradient(#232323, #1c1c1c); }
.pane-price { height: 365px; background: linear-gradient(#1a1a1a, #060606); }
.pane-vol { height: 114px; background: linear-gradient(#050505, #000); }
.sep { height: 3px; flex: none; background: #666; border-top: 1px solid #aaa; border-bottom: 1px solid #aaa; }
.sep-wide { height: 4px; }
.axis { flex: none; }
.tick { fill: none; }
.axis-text text { font-size: 17px; fill: #c4c4c4; }
.axis-val { font-size: 17px; }
.axis-bold { font-size: 19px; font-weight: bold; }
.time-text text { font-size: 18px; fill: #c4c4c4; text-anchor: middle; }
.time-cur { font-size: 18px; text-anchor: middle; }
.equity-bar { position: absolute; left: 3px; top: 0; width: 199px; height: 23px; background: #fff; display: flex; align-items: center; font-size: 18px; padding-left: 3px; white-space: nowrap; }
.equity-bar span { width: 122px; }
.eq-ic { width: 20px; height: 20px; margin-right: 5px; }
.ordertabs { position: absolute; display: flex; font-size: 18px; }
.ordertabs-top { left: 1029px; top: 0; height: 24px; color: #12c0f0; }
.ordertabs-bot { left: 1029px; bottom: 0; height: 25px; color: #12c0f0; }
.otab { overflow: hidden; display: flex; justify-content: flex-end; align-items: center; white-space: nowrap; padding-right: 2px; }
.ordertabs-top .otab { background: #5a4a28; border: 1px solid #8a7030; border-top: 0; border-radius: 0 0 3px 3px; }
.ordertabs-bot .otab { background: #33485a; border: 1px solid #4a80c0; border-bottom: 0; border-radius: 3px 3px 0 0; }
.otab-a { width: 82px; }
.otab-b { width: 45px; }
.otab-c { width: 22px; }
.otab-d { width: 102px; margin-left: 2px; }
.otab-e { width: 60px; }
.otab-f { width: 52px; }
.otab-g { width: 71px; margin-left: 11px; }
.timeaxis { height: 29px; flex: none; background: #666; }
.time-svg { width: 1917px; }
.bottombar { height: 50px; flex: none; display: flex; align-items: center; padding-left: 1029px; background: linear-gradient(#fff, #efefef); }
.hscroll-main { width: 716px; height: 25px; display: flex; }
.hs-track { width: 260px; background: #ececec; border-top: 1px solid #ccc; border-bottom: 1px solid #ccc; }
.hs-thumb { flex: 1; background: linear-gradient(#fff, #f0f0f0); border: 1px solid #c8c8c8; border-radius: 3px; display: flex; align-items: center; justify-content: center; }
.hs-btn { width: 24px; background: linear-gradient(#fff, #eee); border: 1px solid #c8c8c8; border-radius: 3px; display: flex; align-items: center; justify-content: center; }
.bb-ic { height: 36px; width: 28px; margin-left: 14px; }
.bb-first { margin-left: 10px; width: 26px; }
.strip { height: 4px; flex: none; display: flex; background: #2c3b44; }
.st-a { width: 47px; }
.st-b { width: 344px; background: #ececec; }
.st-c { width: 668px; }
.st-d { width: 155px; background: #444; }

/* report window */
.report { position: absolute; left: 0; top: 23px; width: 1029px; height: 937px; background: #f0f0f0; display: flex; flex-direction: column; overflow: hidden; }
.rp-title { height: 33px; flex: none; display: flex; align-items: center; background: linear-gradient(#ffffff, #eaeaea); border-top: 1px solid #fff; border-bottom: 1px solid #c8c8c8; font-size: 17.500px; padding: 1px 0 0 3px; }
.rp-candle { width: 25px; height: 27px; }
.rt { border-right: 1px solid #ccc; display: flex; align-items: center; height: 22px; white-space: nowrap; }
.rt-1 { margin-left: 3px; width: 173px; font-size: 17px; }
.rt-2 { width: 105px; padding-left: 7px; }
.rt-3 { width: 68px; padding-left: 6px; }
.rt-4 { border: 0; padding-left: 6px; font-size: 17.700px; }
.rp-ctl { margin-left: auto; display: flex; gap: 7px; margin-right: 7px; }
.rc { width: 16px; height: 14px; }
.rp-head { height: 65px; flex: none; margin: 0 7px 0 5px; display: flex; align-items: stretch; border-bottom: 1px solid #bbb; background: #f0f0f0; padding-top: 1px; }
.hd-inst { width: 228px; padding: 2px 0 0 4px; border-right: 1px solid #bbb; display: flex; align-items: center; justify-content: center; font-weight: bold; font-size: 17.800px; white-space: nowrap; }
.hd-sys { width: 348px; border-right: 1px solid #bbb; display: flex; align-items: center; }
.hd-sysname { width: 148px; margin: 2px 0 0 5px; text-align: center; font-weight: bold; font-size: 17.900px; line-height: 22px; white-space: nowrap; }
.hd-btn { width: 179px; height: 32px; margin-left: -5px; background: linear-gradient(#fafafa, #eee); border: 1px solid #c4c4c4; border-radius: 3px; font: inherit; font-size: 17.500px; color: #000; padding: 0; }
.hd-dates { width: 385px; padding: 1px 0 0 17px; display: flex; flex-direction: column; justify-content: center; font-size: 17.500px; line-height: 22px; white-space: nowrap; }
.hd-row { display: flex; }
.hd-k { width: 67px; }
.hd-d { font-size: 18.200px; }
.hd-d b { font-size: 17.500px; }
.hd-print { width: 32px; height: 28px; margin-top: 19px; }
.tabs { flex: none; height: 29px; margin: 10px 0 0 11px; display: flex; gap: 1px; font-size: 17.100px; }
.tab { height: 29px; padding: 2px 10px 0; display: flex; align-items: center; background: linear-gradient(#f8f8f8, #ededed); border: 1px solid #c4c4c4; border-bottom: 0; border-radius: 3px 3px 0 0; white-space: nowrap; margin-top: 1px; }
.tab-on { background: linear-gradient(#508c3a, #3c7029); color: #fff; margin-top: 0; margin-right: 0; border-color: #3c7029; width: 96px; justify-content: center; padding: 0; }
.panel { flex: none; margin: 0 11px; width: 1007px; height: 756px; border: 1px solid #bbb; border-top-color: #aaa; display: flex; flex-direction: column; background: #f6f6f6; }
.panel-main { height: 729px; flex: none; display: flex; }
.viewport { width: 979px; height: 729px; overflow: hidden; flex: none; }
.rp-status { flex: none; margin: 11px 5px 0 3px; border-top: 1px solid #bbb; padding: 4px 0 0 3px; font-size: 17.300px; line-height: 22px; white-space: nowrap; height: 100px; background: #f0f0f0; }

/* scrollbars */
.vscroll { width: 26px; display: flex; flex-direction: column; background: #ececec; border-left: 1px solid #bbb; }
.vs-btn { height: 25px; flex: none; background: linear-gradient(#fff, #f2f2f2); border: 1px solid #c8c8c8; border-radius: 3px; display: flex; align-items: center; justify-content: center; }
.vs-thumb { height: 457px; flex: none; background: linear-gradient(90deg, #fff, #f4f4f4); border: 1px solid #c8c8c8; display: flex; align-items: center; justify-content: center; }
.vs-track { flex: 1; }
.hscroll { height: 25px; flex: none; display: flex; background: #ececec; border-top: 1px solid #aaa; border-bottom: 2px solid #aaa; }
.h-btn { width: 25px; flex: none; background: linear-gradient(#fff, #f2f2f2); border: 1px solid #c8c8c8; border-radius: 3px; display: flex; align-items: center; justify-content: center; }
.h-thumb { width: 903px; flex: none; background: linear-gradient(#fff, #f2f2f2); border: 1px solid #c8c8c8; border-radius: 3px; display: flex; align-items: center; justify-content: center; }
.h-track { flex: 1; }
.h-corner { width: 26px; flex: none; background: #f0f0f0; }

/* overview */
.bigline { font-size: 25.500px; line-height: 32px; text-align: center; white-space: nowrap; }
.ov-top { height: 405px; display: flex; flex: none; margin: 0 0 0 21px; border-bottom: 1px solid #bbb; }
.ov-left { width: 532px; flex: none; padding-top: 23px; }
.ov-lhead { padding-right: 15px; }
.ov-cols { display: flex; margin-top: 8px; padding-left: 51px; }
.ov-col { width: 221px; flex: none; font-size: 25.700px; }
.g-title { width: 108px; text-align: center; line-height: 32px; white-space: nowrap; }
.g-title-clip { margin-left: 3px; width: 105px; overflow: hidden; }
.g-title-in { width: 162px; }
.donut { width: 108px; height: 101px; margin-top: 8px; position: relative; display: flex; justify-content: center; align-items: center; }
.donut-2 { width: 102px; margin-left: 3px; }
.donut-svg { width: 102px; height: 102px; position: absolute; left: 3px; top: 0; }
.donut-2 .donut-svg { left: 0; }
.donut-val { position: relative; font-size: 26px; line-height: 32px; }
.donut-val-clip { width: 86px; margin-left: 22px; overflow: hidden; white-space: nowrap; }
.stat { line-height: 33px; height: 33px; display: flex; align-items: center; white-space: nowrap; }
.stat-num { font-size: 25px; }
.donut + .stat { margin-top: 9px; }
.stat-ind { padding-left: 22px; }
.stat-gap { margin-top: 5px; }
.sw { width: 16px; height: 17px; margin-right: 6px; margin-top: -3px; border: 1px solid; flex: none; }
.sw-g { background: linear-gradient(#5fe85f, #17c417); border-color: #18b018; }
.sw-k { background: linear-gradient(#555, #0c200c); border-color: #111; }
.sw-r { background: linear-gradient(#f04848, #c04a10); border-color: #c83020; }
.ov-vline { width: 1px; flex: none; background: #bbb; margin: 21px 0 20px; }
.ov-right { flex: 1; padding-top: 23px; padding-left: 17px; }
.wf { margin-left: 18px; margin-top: 36px; }
.wf-lab { font-size: 17.300px; line-height: 22px; white-space: nowrap; }
.wf-val { font-size: 30px; line-height: 40px; white-space: nowrap; }
.wf-best { width: 352px; text-align: center; }
.wf-best .wf-val { margin-top: 2px; }
.wf-mid { display: flex; margin-top: 5px; }
.wf-l { width: 146px; text-align: right; margin-top: -6px; }
.wf-lab-in { padding-right: 6px; }
.wf-val-l { margin-top: 3px; }
.wf-bars { width: 76px; height: 148px; margin-left: 3px; }
.wf-r { margin-left: 4px; padding-top: 56px; }
.wf-val-r { margin-top: 1px; }
.wf-worst { width: 390px; text-align: center; margin-top: 8px; }
.wf-worst .wf-val { margin-top: 2px; }
.ov-dd { height: 145px; margin-left: 21px; display: flex; flex: none; border-bottom: 1px solid #bbb; }
.dd { display: flex; flex: none; }
.dd-1 { width: 484px; }
.dd-2 { flex: 1; min-width: 0; overflow: hidden; }
.dd-svg { width: 172px; height: 103px; margin-top: 21px; }
.dd-s { fill: none; vector-effect: non-scaling-stroke; }
.dd-text { padding-top: 31px; margin-left: 20px; white-space: nowrap; }
.dd-h { font-size: 25.500px; line-height: 33px; }
.dd-v { font-size: 24.600px; line-height: 32px; padding-top: 1px; }
.dd-n { font-size: 17.300px; line-height: 22px; }
.ov-bot { display: flex; height: 300px; }
.ov-time { width: 171px; flex: none; margin-top: 21px; border-right: 1px solid #bbb; padding-top: 5px; }
.ot-title { font-size: 26px; }
.ot-gauge { width: 102px; height: 102px; margin: 7px auto 0 34px; }
.ot-val { font-size: 24px; text-anchor: middle; }
.ov-brut { flex: 1; }
.br-head { display: flex; align-items: center; margin-top: 21px; padding-left: 241px; height: 41px; font-size: 25.500px; white-space: nowrap; gap: 2px; }
.br-sel { width: 186px; height: 41px; font-size: 25.500px; border-radius: 4px; padding-top: 2px; }
.br-sel .dd-arrow { width: 34px; background: linear-gradient(#fff, #e8e8e8); }
.br-sel .tri-down { border-left-width: 9px; border-right-width: 9px; border-top-width: 11px; }
.br-chart { margin-top: 15px; margin-left: 21px; overflow: visible; }
.br-axis text { font-size: 19px; fill: #cfcfcf; }
```
